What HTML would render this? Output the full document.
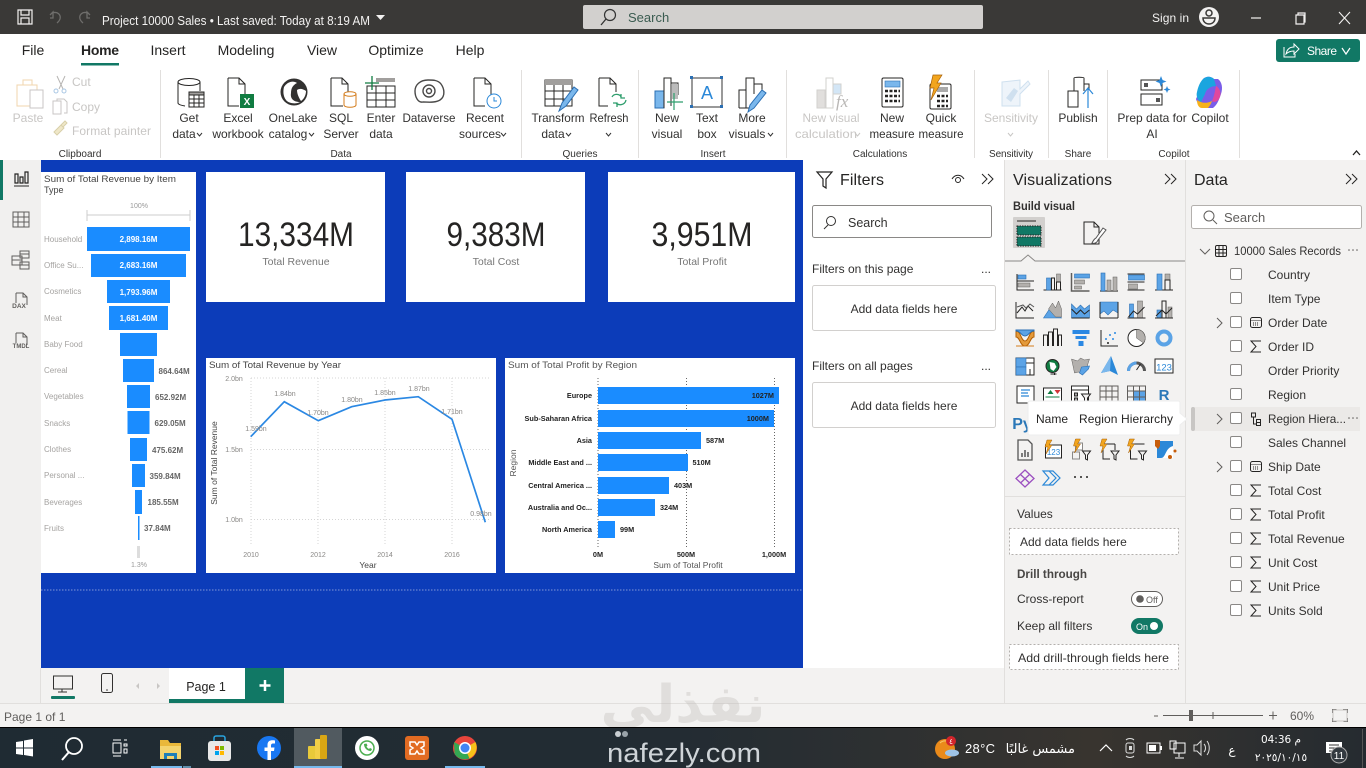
<!DOCTYPE html>
<html lang="en"><head><meta charset="utf-8"><title>Project 10000 Sales</title>
<style>
html,body{margin:0;padding:0;width:1366px;height:768px;overflow:hidden;background:#f3f2f1}
svg{display:block;position:absolute;left:0;top:0}
text{font-family:"Liberation Sans","DejaVu Sans",sans-serif;fill:#252423}
.r{font-size:12px;text-anchor:middle;fill:#323130}
.d{font-size:12px;text-anchor:middle;fill:#c8c6c4}
.g{font-size:10px;text-anchor:middle;fill:#323130}
.t{font-size:14px;text-anchor:middle;fill:#252423}
.p{font-size:12px;fill:#323130}
.h{font-size:16px;font-weight:bold;fill:#252423}
.c{font-size:7px;fill:#8a8886}
.n{font-size:7px;font-weight:bold;fill:#555}
.b{font-size:7.300px;font-weight:bold;fill:#222}
.i{fill:none;stroke:#252423;stroke-width:1}
.bl{fill:#5ba3e6;stroke:#2b6fb3;stroke-width:.6}
.gy{fill:#b3b0ad;stroke:#605e5c;stroke-width:.5}
</style></head><body>
<svg width="1366" height="768" viewBox="0 0 1366 768" xmlns="http://www.w3.org/2000/svg">
<defs><linearGradient id="tb" x1="0" x2="1" y1="0" y2="0"><stop offset="0" stop-color="#1f2b33"/><stop offset=".5" stop-color="#232c33"/><stop offset=".8" stop-color="#38342f"/><stop offset="1" stop-color="#252b30"/></linearGradient></defs>

<!-- backgrounds -->
<rect width="1366" height="768" fill="#f3f2f1"/>
<rect width="1366" height="34" fill="#3a3937"/>
<rect y="34" width="1366" height="126" fill="#fff"/>
<rect x="0" y="160" width="41" height="543" fill="#f1f0ef"/>
<rect x="41" y="160" width="762" height="508" fill="#0c3cb9"/>
<rect x="803" y="160" width="201" height="508" fill="#fff"/>
<path d="M1004.500 160V703M1185.500 160V703" stroke="#e1dfdd" fill="none"/>
<path d="M0 703.500H1366M40.500 668V703" stroke="#e1dfdd" fill="none"/>

<!-- watermark -->
<text x="683" y="722" style="font-family:'DejaVu Sans',sans-serif;font-size:52px;font-weight:bold;text-anchor:middle;fill:#bdbab6;opacity:.35" direction="rtl" textLength="165" lengthAdjust="spacingAndGlyphs">نفذلي</text>

<!-- title bar -->
<g fill="none" stroke="#f3f2f1" stroke-width="1.200">
<path d="M18 10h14v14H18zM21 10v5h8v-5M21 24v-6h8v6"/>
</g>
<g fill="none" stroke="#6f6e6c" stroke-width="1.300">
<path d="M50 15l3-3v6h-3M52 13c6-2 9 2 8 6-.6 2-2 3-3 4"/>
<path d="M90 15l-3-3v6h3M88 13c-6-2-9 2-8 6 .6 2 2 3 3 4"/>
</g>
<text x="102" y="25" style="font-size:12.500px;fill:#f3f2f1" textLength="268" lengthAdjust="spacingAndGlyphs">Project 10000 Sales  •  Last saved: Today at 8:19 AM</text>
<path d="M376 15h9l-4.500 5z" fill="#f3f2f1"/>
<rect x="583" y="5" width="400" height="24" rx="2" fill="#d2d0ce"/>
<circle cx="610" cy="15" r="5.500" fill="none" stroke="#333" stroke-width="1.200"/><path d="M606 19l-5 6" stroke="#333" stroke-width="1.300"/>
<text x="628" y="22" style="font-size:13px;fill:#3a5b50">Search</text>
<text x="1152" y="22" style="font-size:12px;fill:#f3f2f1" textLength="37">Sign in</text>
<circle cx="1209" cy="17" r="10" fill="#f3f2f1"/><circle cx="1209" cy="13" r="3" fill="none" stroke="#3a3937" stroke-width="1.500"/><path d="M1203 18h12c0 4-3 6-6 6s-6-2-6-6z" fill="none" stroke="#3a3937" stroke-width="1.500"/>
<path d="M1251 18h10" stroke="#f3f2f1" stroke-width="1.200"/>
<path d="M1296 15h8v9h-8zM1298 15v-2h7v9h-1" fill="none" stroke="#f3f2f1" stroke-width="1.200"/>
<path d="M1339 12l11 12M1350 12l-11 12" stroke="#f3f2f1" stroke-width="1.100"/>

<!-- tabs -->
<text class="t" x="33" y="55">File</text>
<text class="t" x="100" y="55" style="font-weight:bold" textLength="38">Home</text>
<rect x="81" y="63" width="38" height="2.500" fill="#117865"/>
<text class="t" x="168" y="55">Insert</text>
<text class="t" x="246" y="55">Modeling</text>
<text class="t" x="322" y="55">View</text>
<text class="t" x="396" y="55">Optimize</text>
<text class="t" x="470" y="55">Help</text>
<rect x="1276" y="39" width="84" height="23" rx="3" fill="#117865"/>
<path d="M1284 47v10h11v-3M1286 54c1-5 4-7 8-7v-3l5 5-5 5v-3c-3 0-6 1-8 3z" fill="none" stroke="#fff" stroke-width="1"/>
<text x="1307" y="55" style="font-size:12px;fill:#fff" textLength="30">Share</text>
<path d="M1342 48l4 6 4-6" fill="none" stroke="#fff" stroke-width="1.200"/>

<!-- ribbon separators -->
<path d="M160.500 70V158M521.500 70V158M638.500 70V158M786.500 70V158M974.500 70V158M1048.500 70V158M1107.500 70V158M1239.500 70V158" stroke="#e1dfdd" fill="none"/>

<!-- clipboard -->
<g fill="none" stroke-width="1">
<path d="M17 85h20v21H17z" stroke="#f0d5ad"/><rect x="23" y="80" width="9" height="5" stroke="#f0d5ad"/>
<rect x="30" y="90" width="13" height="18" fill="#fff" stroke="#c8c6c4"/>
<path d="M57 76l6 13M65 76l-6 13" stroke="#b7b5b3"/><circle cx="56" cy="91" r="2" stroke="#a9c7e4"/><circle cx="64" cy="91" r="2" stroke="#a9c7e4"/>
<path d="M53 101h8v13h-8zM57 101v-2h7l3 3v11h-3" stroke="#c8c6c4"/>
<path d="M54 132l7-7 3 3-7 7zM61 125l4-4 2 2-4 4" stroke="#d8cfa9" fill="#efe7c8"/>
</g>
<text class="d" x="28" y="122">Paste</text>
<text class="d" x="72" y="86" style="text-anchor:start">Cut</text>
<text class="d" x="72" y="111" style="text-anchor:start">Copy</text>
<text class="d" x="72" y="135" style="text-anchor:start" textLength="79">Format painter</text>
<text class="g" x="80" y="157">Clipboard</text>

<!-- data -->
<g fill="none" stroke="#252423">
<ellipse cx="189" cy="82" rx="11" ry="3.500"/><path d="M178 82v21c0 1 1 2 7 3M200 82v9"/>
<rect x="189" y="92" width="15" height="15" fill="#fff"/><rect x="189" y="92" width="15" height="3" fill="#a19f9d"/><path d="M194 95v12M199 95v12M189 99h15M189 103h15"/>
<path d="M228 78h11l6 6v10M228 78v28h11M239 78v6h6"/>
</g>
<rect x="240" y="94" width="14" height="14" fill="#107c41"/><text x="247" y="105" style="font-size:10px;font-weight:bold;fill:#fff;text-anchor:middle">X</text>
<circle cx="294" cy="92" r="13.500" fill="#323130"/><path d="M284 87c3-5 9-7 13-4-4 2-6 5-6 10-1 6 3 9 9 9-3 2-11 2-14-2-3-4-3-9-2-13z" fill="#fff"/><path d="M297 90c3-2 6-1 9 1 0 4-2 8-5 10-2-3-4-7-4-11z" fill="#fff"/>
<g fill="none" stroke="#252423">
<path d="M331 78h11l6 6v10M331 78v28h12M342 78v6h6"/>
<path d="M344 94c0-3 12-3 12 0v11c0 3-12 3-12 0zM344 94c0 3 12 3 12 0" stroke="#d47d1d" fill="#fff"/>
<path d="M367 86h28v21h-28zM367 93h28M367 100h28M376 86v21M386 86v21"/>
</g>
<rect x="376" y="78" width="19" height="4" fill="#a19f9d"/>
<path d="M372 76v14M365 83h14" stroke="#107c41" stroke-width="1.300"/>
<g fill="none" stroke="#4a4948" stroke-width="1.400"><path d="M428 80c-8 0-13 5-13 11 0 6 3 12 8 11 5 0 12 1 17-2 6-4 4-12 1-16-3-4-8-4-13-4z"/><circle cx="429" cy="91" r="6"/><circle cx="429" cy="91" r="2.500"/></g>
<g fill="none" stroke="#252423"><path d="M474 78h11l6 6v11M474 78v28h11M485 78v6h6"/></g>
<circle cx="494" cy="101" r="7" fill="#fff" stroke="#2b88d8"/><path d="M494 97v4h3" fill="none" stroke="#2b88d8"/>
<text class="r" x="189" y="122">Get</text><text class="r" x="184" y="138">data</text><path d="M197 133l2.500 3 2.500-3" fill="none" stroke="#333"/>
<text class="r" x="238" y="122">Excel</text><text class="r" x="238" y="138">workbook</text>
<text class="r" x="293" y="122">OneLake</text><text class="r" x="288" y="138">catalog</text><path d="M309 133l2.500 3 2.500-3" fill="none" stroke="#333"/>
<text class="r" x="341" y="122">SQL</text><text class="r" x="341" y="138">Server</text>
<text class="r" x="381" y="122">Enter</text><text class="r" x="381" y="138">data</text>
<text class="r" x="429" y="122" textLength="53" lengthAdjust="spacingAndGlyphs">Dataverse</text>
<text class="r" x="485" y="122">Recent</text><text class="r" x="480" y="138">sources</text><path d="M501 133l2.500 3 2.500-3" fill="none" stroke="#333"/>
<text class="g" x="341" y="157">Data</text>

<!-- queries -->
<g fill="none" stroke="#252423"><rect x="545" y="80" width="27" height="26"/><path d="M545 91h27M545 99h27M554 85v21M563 85v21"/></g>
<rect x="545" y="79" width="27" height="6" fill="#a19f9d"/>
<path d="M559 111l3-8 12-16 4 3-12 16z" fill="#7ab7ec" stroke="#2b6fb3"/>
<g fill="none"><path d="M599 78h11l6 6v8M599 78v28h9M610 78v6h6" stroke="#252423"/>
<path d="M612 97c2-4 8-3 9 0M626 100c-1 5-7 6-10 3M621 94v4h4M617 107v-4h-4" stroke="#2f9e6d" stroke-width="1.300"/></g>
<text class="r" x="558" y="122" textLength="53" lengthAdjust="spacingAndGlyphs">Transform</text><text class="r" x="553" y="138">data</text><path d="M566 133l2.500 3 2.500-3" fill="none" stroke="#333"/>
<text class="r" x="609" y="122" textLength="39" lengthAdjust="spacingAndGlyphs">Refresh</text><path d="M606 133l2.500 3 2.500-3" fill="none" stroke="#333"/>
<text class="g" x="580" y="157">Queries</text>

<!-- insert -->
<rect x="655" y="91" width="9" height="17" fill="#7ab7ec" stroke="#2b6fb3"/><g fill="none" stroke="#252423"><path d="M664 108V78h7v28M671 83h7v12"/></g><rect x="672" y="84" width="6" height="15" fill="#bbb"/><path d="M674 93v17M667 102h16" stroke="#2f9e6d" stroke-width="1.200"/>
<rect x="692" y="78" width="30" height="29" fill="#fff" stroke="#333"/><text x="707" y="99" style="font-size:18px;fill:#2b88d8;text-anchor:middle">A</text>
<g fill="#2b6fb3"><rect x="690" y="76" width="3" height="3"/><rect x="720" y="76" width="3" height="3"/><rect x="690" y="105" width="3" height="3"/><rect x="720" y="105" width="3" height="3"/></g>
<g fill="none" stroke="#252423"><path d="M739 108V90h7v18M746 90V78h8v16M754 84h8v6M739 108h12"/></g><path d="M748 112l2-7 12-15 4 3-12 15z" fill="#7ab7ec" stroke="#2b6fb3"/>
<text class="r" x="667" y="122">New</text><text class="r" x="667" y="138">visual</text>
<text class="r" x="707" y="122">Text</text><text class="r" x="707" y="138">box</text>
<text class="r" x="752" y="122">More</text><text class="r" x="747" y="138">visuals</text><path d="M768 133l2.500 3 2.500-3" fill="none" stroke="#333"/>
<text class="g" x="713" y="157">Insert</text>

<!-- calcs -->
<g fill="none" stroke="#d2d0ce"><rect x="817" y="90" width="8" height="18" fill="#e1dfdd"/><path d="M826 78h7v30h-7z"/><rect x="833" y="84" width="8" height="10" fill="#d3e6f6"/></g>
<text x="836" y="107" style="font-size:17px;font-style:italic;font-family:'Liberation Serif',serif;fill:#b8b6b4">fx</text>
<rect x="882" y="78" width="21" height="29" rx="1.500" fill="#fff" stroke="#252423"/><rect x="885" y="81" width="15" height="6" fill="#7ab7ec" stroke="#2b6fb3" stroke-width=".6"/>
<path d="M885 91h15M885 96h15M885 101h15" stroke="#252423" stroke-width="2.500" stroke-dasharray="3 1.500"/>
<rect x="930" y="84" width="21" height="25" rx="1.500" fill="#fff" stroke="#252423"/><rect x="937" y="87" width="11" height="5" fill="#aaa"/>
<path d="M937 96h11M937 101h11M937 106h11" stroke="#252423" stroke-width="2.500" stroke-dasharray="3 1.500"/>
<path d="M933 75h9l-5 8h4l-10 17 3-12h-4z" fill="#f2a51e" stroke="#a8610a" stroke-width=".7"/>
<text class="d" x="831" y="122" textLength="57" lengthAdjust="spacingAndGlyphs">New visual</text><text class="d" x="826" y="138" textLength="62" lengthAdjust="spacingAndGlyphs">calculation</text><path d="M855 133l2.500 3 2.500-3" fill="none" stroke="#c8c6c4"/>
<text class="r" x="892" y="122">New</text><text class="r" x="892" y="138" textLength="45" lengthAdjust="spacingAndGlyphs">measure</text>
<text class="r" x="941" y="122">Quick</text><text class="r" x="941" y="138" textLength="45" lengthAdjust="spacingAndGlyphs">measure</text>
<text class="g" x="880" y="157">Calculations</text>

<!-- sensitivity share copilot -->
<path d="M1002 82l18-2v9l8-8 2 3-10 10v12h-18z" fill="#eef4fa" stroke="#cfe0ef"/><path d="M1006 98l8-10 4 3-7 11z" fill="#cfe0ef"/>
<text class="d" x="1011" y="122" textLength="54" lengthAdjust="spacingAndGlyphs">Sensitivity</text><path d="M1008 133l2.500 3 2.500-3" fill="none" stroke="#c8c6c4"/>
<text class="g" x="1011" y="157" textLength="44">Sensitivity</text>
<g fill="none" stroke="#252423"><path d="M1068 107V91h10v16zM1074 91V78c0-1 10-1 10 0v13M1084 84h5v6"/></g>
<path d="M1088 108V88M1083 94l5-6 5 6" fill="none" stroke="#2b88d8" stroke-width="1.200"/>
<text class="r" x="1078" y="122">Publish</text><text class="g" x="1078" y="157">Share</text>
<g fill="none" stroke="#252423"><rect x="1141" y="80" width="21" height="10"/><rect x="1141" y="94" width="21" height="11"/></g><rect x="1144" y="83" width="4" height="4" fill="#555"/><rect x="1156" y="98" width="4" height="4" fill="#555"/>
<path d="M1161 76l1.500 4 4 1.500-4 1.500-1.500 4-1.500-4-4-1.500 4-1.500zM1167 86l1 2.500 2.500 1-2.500 1-1 2.500-1-2.500-2.500-1 2.500-1z" fill="#2b88d8"/>
<path d="M1203 79c3-3 8-3 11 0h4c4 3 5 9 3 15-2 6-4 11-8 14h-8c-5-1-8-5-9-9 3-6 4-14 7-20z" fill="#7a5de8"/>
<path d="M1203 79c3-3 8-3 11 0l2 7c-5 0-10 3-11 8l-4 8c-4-2-5-7-4-10 1-5 3-10 6-13z" fill="#1aa5df"/>
<path d="M1197 100c4 3 9 4 15 1-1 3-3 6-4 7h-6c-3 0-5-3-5-8z" fill="#f7b21b"/><path d="M1216 86c4 2 6 8 3 13-3 4-6 3-7 2 2-4 3-10 4-15z" fill="#e0479e"/>
<text class="r" x="1152" y="122">Prep data for</text><text class="r" x="1152" y="138">AI</text>
<text class="r" x="1210" y="122">Copilot</text><text class="g" x="1174" y="157">Copilot</text>
<path d="M1353 155l3.500-4 3.500 4" fill="none" stroke="#252423" stroke-width="1.300"/>

<!-- left rail -->
<rect x="0" y="160" width="3" height="40" fill="#117865"/>
<g fill="none" stroke="#252423" stroke-width="1"><path d="M14 186h15"/><path d="M15 174h3v9h-3zM20 177h3v6h-3zM25 172h3v11h-3z" stroke-width="1.200"/></g>
<g fill="none" stroke="#605e5c"><rect x="13" y="212" width="16" height="15"/><path d="M13 217h16M13 222h16M18 212v15M24 212v15"/></g>
<g fill="none" stroke="#605e5c"><rect x="12" y="256" width="10" height="9"/><rect x="20" y="251" width="9" height="7"/><rect x="20" y="262" width="9" height="7"/><path d="M12 260h10M20 254h9M20 265h9"/></g>
<path d="M16 293h7l4 4v8M16 293v10M23 293v4h4M16 355" fill="none" stroke="#605e5c"/><text x="19" y="308" style="font-size:6.500px;fill:#605e5c;text-anchor:middle;font-weight:bold">DAX</text>
<path d="M16 333h7l4 4v8M16 333v10M23 333v4h4" fill="none" stroke="#605e5c"/><text x="21" y="348" style="font-size:6px;fill:#605e5c;text-anchor:middle;font-weight:bold">TMDL</text>

<!-- cards -->
<rect x="41" y="172" width="155" height="401" fill="#fff"/>
<rect x="206" y="172" width="179" height="130" fill="#fff"/>
<rect x="406" y="172" width="179" height="130" fill="#fff"/>
<rect x="608" y="172" width="187" height="130" fill="#fff"/>
<rect x="206" y="358" width="290" height="215" fill="#fff"/>
<rect x="505" y="358" width="290" height="215" fill="#fff"/>
<path d="M41 590H803" stroke="#7f96d8" stroke-dasharray="1.500 1.500" fill="none"/>

<text x="296" y="246" style="font-size:34px;text-anchor:middle" textLength="116" lengthAdjust="spacingAndGlyphs">13,334M</text>
<text x="296" y="265" style="font-size:10.500px;fill:#777;text-anchor:middle">Total Revenue</text>
<text x="496" y="246" style="font-size:34px;text-anchor:middle" textLength="99" lengthAdjust="spacingAndGlyphs">9,383M</text>
<text x="496" y="265" style="font-size:10.500px;fill:#777;text-anchor:middle">Total Cost</text>
<text x="702" y="246" style="font-size:34px;text-anchor:middle" textLength="101" lengthAdjust="spacingAndGlyphs">3,951M</text>
<text x="702" y="265" style="font-size:10.500px;fill:#777;text-anchor:middle">Total Profit</text>

<!-- funnel -->
<text x="44" y="182" style="font-size:9px;fill:#444" textLength="132" lengthAdjust="spacingAndGlyphs">Sum of Total Revenue by Item</text>
<text x="44" y="193" style="font-size:9px;fill:#444">Type</text>
<text x="139" y="208" class="c" style="text-anchor:middle;fill:#999">100%</text>
<path d="M87 215H190M87 210V221M190 210V221" stroke="#ccc" fill="none"/>
<g fill="#1a8cff">
<rect x="87" y="227" width="103" height="24"/><rect x="91" y="254" width="95" height="23"/>
<rect x="107" y="280" width="63" height="23"/><rect x="109" y="306" width="59" height="24"/>
<rect x="120" y="333" width="37" height="23"/><rect x="123" y="359" width="31" height="23"/>
<rect x="127" y="385" width="23" height="23"/><rect x="127.500" y="411" width="22" height="23"/>
<rect x="130" y="438" width="17" height="23"/><rect x="132" y="464" width="13" height="23"/>
<rect x="135" y="490" width="7" height="24"/><rect x="138" y="516" width="1.500" height="24"/>
</g>
<rect x="137" y="546" width="3" height="12" fill="#ddd"/>
<text x="139" y="567" class="c" style="text-anchor:middle;fill:#999">1.3%</text>
<g style="font-size:8px">
<text x="44" y="242" style="fill:#a5a3a1">Household</text><text x="44" y="268" style="fill:#a5a3a1">Office Su...</text><text x="44" y="294" style="fill:#a5a3a1">Cosmetics</text><text x="44" y="321" style="fill:#a5a3a1">Meat</text><text x="44" y="347" style="fill:#a5a3a1">Baby Food</text><text x="44" y="373" style="fill:#a5a3a1">Cereal</text><text x="44" y="399" style="fill:#a5a3a1">Vegetables</text><text x="44" y="426" style="fill:#a5a3a1">Snacks</text><text x="44" y="452" style="fill:#a5a3a1">Clothes</text><text x="44" y="478" style="fill:#a5a3a1">Personal ...</text><text x="44" y="505" style="fill:#a5a3a1">Beverages</text><text x="44" y="531" style="fill:#a5a3a1">Fruits</text>
</g>
<g style="font-size:8px;font-weight:bold;text-anchor:middle">
<text x="138.500" y="242" style="fill:#fff">2,898.16M</text><text x="138.500" y="268" style="fill:#fff">2,683.16M</text><text x="138.500" y="295" style="fill:#fff">1,793.96M</text><text x="138.500" y="321" style="fill:#fff">1,681.40M</text>
</g>
<g style="font-size:8px;font-weight:bold">
<text x="158.500" y="374" style="fill:#666">864.64M</text><text x="155" y="400" style="fill:#666">652.92M</text><text x="154.500" y="426" style="fill:#666">629.05M</text><text x="152" y="453" style="fill:#666">475.62M</text><text x="149.500" y="479" style="fill:#666">359.84M</text><text x="147.500" y="505" style="fill:#666">185.55M</text><text x="144" y="531" style="fill:#666">37.84M</text>
</g>

<!-- line chart -->
<text x="209" y="368" style="font-size:9px;fill:#444" textLength="132" lengthAdjust="spacingAndGlyphs">Sum of Total Revenue by Year</text>
<path d="M251 378H490M251 449.500H490M251 519.500H490M251 378V545M318 378V545M385 378V545M452 378V545" stroke="#d5d5d5" stroke-dasharray="1 2" fill="none"/>
<polyline points="250.700,436.700 284.300,401.700 318.300,420.700 351.700,406.700 385,400 418.300,396.700 452,419.300 485.300,522.300" fill="none" stroke="#2b88e3" stroke-width="1.700"/>
<text x="256" y="431" class="c" style="text-anchor:middle">1.59bn</text><text x="285" y="396" class="c" style="text-anchor:middle">1.84bn</text><text x="318" y="415" class="c" style="text-anchor:middle">1.70bn</text><text x="352" y="402" class="c" style="text-anchor:middle">1.80bn</text><text x="385" y="395" class="c" style="text-anchor:middle">1.85bn</text><text x="419" y="391" class="c" style="text-anchor:middle">1.87bn</text><text x="452" y="414" class="c" style="text-anchor:middle">1.71bn</text><text x="481" y="516" class="c" style="text-anchor:middle">0.98bn</text>
<text x="234" y="381" class="c" style="text-anchor:middle">2.0bn</text><text x="234" y="452" class="c" style="text-anchor:middle">1.5bn</text><text x="234" y="522" class="c" style="text-anchor:middle">1.0bn</text>
<text x="251" y="557" class="c" style="text-anchor:middle">2010</text><text x="318" y="557" class="c" style="text-anchor:middle">2012</text><text x="385" y="557" class="c" style="text-anchor:middle">2014</text><text x="452" y="557" class="c" style="text-anchor:middle">2016</text>
<text x="368" y="568" style="font-size:8.500px;text-anchor:middle;fill:#444">Year</text>
<text transform="translate(217,463) rotate(-90)" style="font-size:8.500px;text-anchor:middle;fill:#444">Sum of Total Revenue</text>

<!-- bar chart -->
<text x="508" y="368" style="font-size:9px;fill:#555" textLength="129" lengthAdjust="spacingAndGlyphs">Sum of Total Profit by Region</text>
<path d="M598 378V548M686.500 378V548M774.500 378V548" stroke="#666" stroke-dasharray="1 2" fill="none"/>
<g fill="#1a8cff"><rect x="598" y="387" width="181" height="17"/><rect x="598" y="410" width="176" height="17"/><rect x="598" y="432" width="103" height="17"/><rect x="598" y="454" width="90" height="17"/><rect x="598" y="477" width="71" height="17"/><rect x="598" y="499" width="57" height="17"/><rect x="598" y="521" width="17" height="17"/></g>
<text class="b" x="592" y="398" style="text-anchor:end">Europe</text><text class="b" x="592" y="421" style="text-anchor:end">Sub-Saharan Africa</text><text class="b" x="592" y="443" style="text-anchor:end">Asia</text><text class="b" x="592" y="465" style="text-anchor:end">Middle East and ...</text><text class="b" x="592" y="488" style="text-anchor:end">Central America ...</text><text class="b" x="592" y="510" style="text-anchor:end">Australia and Oc...</text><text class="b" x="592" y="532" style="text-anchor:end">North America</text>
<text class="b" x="774" y="398" style="text-anchor:end">1027M</text><text class="b" x="769" y="421" style="text-anchor:end">1000M</text>
<text class="b" x="706" y="443">587M</text><text class="b" x="692.500" y="465">510M</text><text class="b" x="674" y="488">403M</text><text class="b" x="660" y="510">324M</text><text class="b" x="620" y="532">99M</text>
<text class="b" x="598" y="557" style="text-anchor:middle">0M</text><text class="b" x="686" y="557" style="text-anchor:middle">500M</text><text class="b" x="774" y="557" style="text-anchor:middle">1,000M</text>
<text x="688" y="568" style="font-size:8.500px;text-anchor:middle;fill:#555">Sum of Total Profit</text>
<text transform="translate(516,463) rotate(-90)" style="font-size:8.500px;text-anchor:middle;fill:#555">Region</text>

<!-- filters pane -->
<path d="M817 172h15l-6 7v9l-3-2v-7z" fill="none" stroke="#252423" stroke-width="1.200"/>
<text x="840" y="185" class="h" style="font-weight:normal;-webkit-text-stroke:.3px #252423" textLength="44">Filters</text>
<path d="M952 179c3-5 9-5 12 0" fill="none" stroke="#252423"/><circle cx="958" cy="180" r="2.500" fill="none" stroke="#252423"/>
<path d="M982 174l5 5-5 5M988 174l5 5-5 5" fill="none" stroke="#252423"/>
<rect x="812.500" y="205.500" width="179" height="32" rx="2" fill="#fff" stroke="#8a8886"/>
<circle cx="831" cy="221" r="4.500" fill="none" stroke="#323130"/><path d="M828 225l-4 4" stroke="#323130"/>
<text x="848" y="227" class="p" style="font-size:12.500px">Search</text>
<text x="812" y="273" class="p">Filters on this page</text><text x="986" y="273" class="p" style="text-anchor:middle">...</text>
<rect x="812.500" y="285.500" width="183" height="45" rx="2" fill="#fff" stroke="#d2d0ce"/>
<text x="904" y="313" class="p" style="text-anchor:middle">Add data fields here</text>
<text x="812" y="370" class="p">Filters on all pages</text><text x="986" y="370" class="p" style="text-anchor:middle">...</text>
<rect x="812.500" y="382.500" width="183" height="45" rx="2" fill="#fff" stroke="#d2d0ce"/>
<text x="904" y="410" class="p" style="text-anchor:middle">Add data fields here</text>

<!-- viz pane -->
<text x="1013" y="185" class="h" style="font-weight:normal;-webkit-text-stroke:.3px #252423" textLength="99">Visualizations</text>
<path d="M1165 174l5 5-5 5M1171 174l5 5-5 5" fill="none" stroke="#252423"/>
<text x="1013" y="210" style="font-size:11.500px;font-weight:bold;fill:#323130" textLength="62" lengthAdjust="spacingAndGlyphs">Build visual</text>
<rect x="1013" y="217" width="32" height="31" fill="#d2d0ce" rx="1"/>
<path d="M1017 221h19" stroke="#252423"/>
<rect x="1017" y="226" width="24" height="9" fill="#117865" stroke="#252423" stroke-dasharray="1.500 1"/>
<rect x="1017" y="237" width="24" height="9" fill="#117865" stroke="#252423" stroke-dasharray="1.500 1"/>
<path d="M1084 222h10l5 5v17h-15z" fill="none" stroke="#252423"/><path d="M1094 222v5h5" fill="none" stroke="#252423"/>
<path d="M1092 243c2 1 5 0 6-3l8-10-3-2-7 10c-2 1-3 3-4 5z" fill="#fff" stroke="#555"/>
<path d="M1005 261h16l7-6 7 6h150" fill="none" stroke="#8a8886"/>

<!-- viz icons row1 y 282 -->
<g fill="none" stroke="#252423" stroke-width="1">
<g transform="translate(1025,282)"><path d="M-8-8V8H9"/><rect x="-7" y="-7" width="8" height="4" class="bl"/><rect x="-7" y="1" width="12" height="4" class="gy"/><path d="M-8-1H9"/></g>
<g transform="translate(1052.500,282)"><path d="M-9 8H9"/><rect x="-6" y="-4" width="4" height="12" class="bl"/><path d="M-1 8V-4h3V8"/><rect x="4" y="-8" width="4" height="8" class="gy"/><path d="M4 0h4V8H4z"/></g>
<g transform="translate(1080.500,282)" stroke="#605e5c"><path d="M-9-9V9H9" stroke-width="1.500"/><rect x="-6" y="-8" width="15" height="4" class="bl"/><rect x="-6" y="-2" width="10" height="4" class="gy"/><rect x="-6" y="4" width="7" height="3" class="gy"/></g>
<g transform="translate(1109,282)" stroke="#605e5c"><path d="M-9 9H9" stroke-width="1.500"/><rect x="-8" y="-9" width="4" height="18" class="bl"/><rect x="-2" y="-2" width="4" height="11" class="gy"/><rect x="4" y="-5" width="4" height="14" class="gy"/></g>
<g transform="translate(1136.500,282)"><path d="M-9-8H8M-9 0H8M-9 8H8"/><rect x="-8" y="-7" width="16" height="5" class="bl"/><rect x="-8" y="2" width="9" height="5" class="gy"/></g>
<g transform="translate(1164,282)"><path d="M-9 8H9"/><rect x="-7" y="-8" width="5" height="16" class="bl"/><rect x="1" y="-8" width="5" height="6" class="gy"/><path d="M1-2H6V8H1z"/></g>
</g>
<!-- row 2 -->
<g fill="none" stroke="#252423" stroke-width="1">
<g transform="translate(1025,310)"><path d="M-9-8V8H9M-8 3l5-6 3 4 3-5 5 5" /><path d="M-8-3l6-2 3 3 4-4 4 3" stroke="#555"/></g>
<g transform="translate(1052.500,310)"><path d="M-9 8l6-9 5 4 2-2 5 7z" class="bl"/><path d="M-4-1l4-6 3 5 3-7 3 8v8H3z" class="gy"/></g>
<g transform="translate(1080.500,310)"><path d="M-9-6l5 5 4-4 4 4 5-4V8H-9z" class="bl"/><path d="M-9-1l5 5 4-4 4 4 5-4" stroke="#252423"/><path d="M-9 8H9"/></g>
<g transform="translate(1109,310)"><path d="M-9-8H9V3l-5-3-5 5-4-4-4 3z" class="bl"/><path d="M-9 8H9M-9-8V8M9-8V8"/></g>
<g transform="translate(1136.500,310)"><rect x="-7" y="-6" width="4" height="14" class="bl"/><rect x="1" y="-9" width="5" height="17" class="gy"/><path d="M-9 8H9M-8 7l5-6 4 3 7-7"/></g>
<g transform="translate(1164,310)"><rect x="-7" y="0" width="4" height="8" class="bl"/><path d="M-2 8V-9h4V8"/><rect x="4" y="-3" width="4" height="11" class="gy"/><path d="M-9 8H9M-8 6l6-6 4 4 6-6"/></g>
</g>
<!-- row 3 -->
<g fill="none" stroke="#252423" stroke-width="1">
<g transform="translate(1025,338)"><path d="M-9-7c5 0 5 10 9 10s4-10 9-10V-1c-4 0-4 9-9 9s-5-9-9-9z" fill="#e39a3b" stroke="#b35d00"/><path d="M-9-7c5 0 5 5 9 5s4-5 9-5v-1H-9z" fill="#5ba3e6" stroke="#2b6fb3"/><path d="M-9 8H9" stroke="#d47d1d"/></g>
<g transform="translate(1052.500,338)"><path d="M-9 8V-3h4v11M-4 8V-6h4V8M1 8V-9h4V8M6 8V-3h3V8" /></g>
<g transform="translate(1080.500,338)"><path d="M-8-8H9v4H-8z" fill="#2b88e3" stroke="none"/><path d="M-5-2H6V1H-5z" fill="#2b88e3" stroke="none"/><path d="M-2 3H3V8H-2z" fill="#2b88e3" stroke="none"/></g>
<g transform="translate(1109,338)"><path d="M-8-8V8H9"/><g fill="#5ba3e6" stroke="none"><rect x="-4" y="0" width="2" height="2"/><rect x="0" y="-4" width="2" height="2"/><rect x="3" y="0" width="2" height="2"/><rect x="-2" y="4" width="2" height="2" fill="#555"/><rect x="5" y="-6" width="2" height="2"/></g></g>
<g transform="translate(1136.500,338)"><circle r="8.500" fill="#fff"/><path d="M0 0V-8.500A8.500 8.500 0 0 1 7 5z" class="gy"/></g>
<g transform="translate(1164,338)"><circle r="6.500" fill="none" stroke="#5ba3e6" stroke-width="4"/></g>
</g>
<!-- row 4 -->
<g fill="none" stroke="#252423" stroke-width="1">
<g transform="translate(1025,366)"><rect x="-9" y="-8" width="18" height="17" fill="#fff"/><rect x="-9" y="-8" width="10" height="9" class="bl"/><rect x="-9" y="1" width="10" height="8" class="bl"/><path d="M1-3H9M5 3v6"/></g>
<g transform="translate(1052.500,366)"><circle r="6.500" fill="#107c41"/><path d="M-3-4l5 1 2 4-3 4-3-2z" fill="#fff" stroke="none"/><path d="M-2 8h6M2 7v2"/></g>
<g transform="translate(1080.500,366)"><path d="M-9-7l6 2 3-3 4 2 5-1-2 6 1 4-6 6-4-3-4 1-1-5z" class="gy"/><path d="M1 1l8-1-1 3-6 6-3-2z" class="bl"/></g>
<g transform="translate(1109,366)"><path d="M2-10L9 9 1 5-8 7z" fill="#2b88d8" stroke="none"/><path d="M2-10L1 5-8 7z" fill="#7ab7ec" stroke="none"/></g>
<g transform="translate(1136.500,366)"><path d="M-8 5a8 8 0 0 1 16 0" stroke-width="3" stroke="#555"/><path d="M-8 5a8 8 0 0 1 8-8" stroke-width="3" stroke="#5ba3e6"/><path d="M0 4l4-6" stroke="#252423"/></g>
<g transform="translate(1164,366)"><rect x="-9" y="-7" width="18" height="14" fill="#fff"/></g>
</g>
<text x="1164" y="370.500" style="font-size:9.500px;text-anchor:middle;fill:#2b88d8">123</text>
<!-- row 5 -->
<g fill="none" stroke="#252423" stroke-width="1">
<g transform="translate(1025,394)"><rect x="-8" y="-8" width="17" height="17" fill="#fff"/><path d="M-4-4H5M-4-1H3M-4 2H4" stroke="#2b88d8" stroke-width="1.300"/></g>
<g transform="translate(1052.500,394)"><rect x="-9" y="-6" width="18" height="14" fill="#fff"/><path d="M-5 0l3-4 3 4z" fill="#107c41" stroke="none"/><path d="M2-4h6l-3 4z" fill="#d13438" stroke="none"/><path d="M-7 3h14" stroke="#107c41"/></g>
<g transform="translate(1080.500,394)"><rect x="-9" y="-8" width="17" height="16" fill="#fff"/><path d="M-9-4H8"/><rect x="-6" y="-1" width="3" height="3" fill="#aaa"/><rect x="-6" y="4" width="3" height="3" fill="#aaa"/><path d="M1 0h9l-3 4v5l-3-2V4z" fill="#f3f2f1"/></g>
<g transform="translate(1109,394)" stroke="#605e5c"><rect x="-9" y="-8" width="18" height="16"/><path d="M-9-3H9M-9 3H9M-3-8V8M3-8V8"/></g>
<g transform="translate(1136.500,394)" stroke="#605e5c"><rect x="-9" y="-8" width="18" height="16"/><rect x="-3" y="-3" width="12" height="11" fill="#5ba3e6"/><path d="M-9-3H9M-9 3H9M-3-8V8M3-8V8"/></g>
</g>
<text x="1164" y="400" style="font-size:15px;font-weight:bold;text-anchor:middle;fill:#2b78b8">R</text>
<text x="1022" y="429" style="font-size:16px;font-weight:bold;text-anchor:middle;fill:#2b78b8">Py</text>
<!-- row 7 -->
<g fill="none" stroke="#252423" stroke-width="1">
<g transform="translate(1025,450)" stroke="#555"><path d="M-7-10H3l4 4V10H-7z" stroke-width="1.300"/><path d="M-3 7V3M0 7V0M3 7V2" stroke-width="1.500"/></g>
<g transform="translate(1052.500,450)"><rect x="-7" y="-5" width="16" height="13" fill="#fff"/></g>
<g transform="translate(1080.500,450)"><rect x="-5" y="-7" width="7" height="7" fill="#fff" stroke="#8a8886"/><rect x="-8" y="2" width="7" height="7" stroke="#8a8886"/><path d="M2 1h8l-3 4v5l-2-1V5z" fill="#f3f2f1"/><path d="M-5-11h5l-3 5h3l-6 9 2-7h-3z" fill="#f2a51e" stroke="#a8610a" stroke-width=".5"/></g>
<g transform="translate(1109,450)"><path d="M-6-6H6M-6-6V9H1M6-6V0" /><path d="M2 1h8l-3 4v5l-2-1V5z" fill="#f3f2f1"/><path d="M-7-11h5l-3 5h3l-6 9 2-7h-3z" fill="#f2a51e" stroke="#a8610a" stroke-width=".5"/></g>
<g transform="translate(1136.500,450)"><path d="M-6-6H8M-6-6V9H1"/><path d="M2 1h8l-3 4v5l-2-1V5z" fill="#f3f2f1"/><path d="M-7-11h5l-3 5h3l-6 9 2-7h-3z" fill="#f2a51e" stroke="#a8610a" stroke-width=".5"/></g>
<g transform="translate(1164,450)"><rect x="-7" y="-9" width="16" height="17" fill="#2b88d8" stroke="none"/><path d="M-3 8c5 0 4-10 12-12V8z" fill="#fff" stroke="none"/><path d="M-9-10h5V-4L-6-1-9-4z" fill="#c75d0a" stroke="none"/><circle cx="6" cy="7" r="2" fill="#c75d0a" stroke="none"/><circle cx="11" cy="1" r="1.500" fill="#c75d0a" stroke="none"/></g>
</g>
<text x="1053.500" y="455" style="font-size:8px;text-anchor:middle;fill:#2b88d8">123</text>
<path d="M1047 440h5l-3 5h3l-6 9 2-7h-3z" fill="#f2a51e" stroke="#a8610a" stroke-width=".5"/>
<!-- row 8 -->
<path d="M1025 470l9 8.500-9 8.500-9-8.500zM1025 470v0M1020.500 474.500l9 8.500M1029.500 474.500l-9 8.500" fill="none" stroke="#9b4fc0" stroke-width="1.300"/>
<path d="M1043 471h10l7 7-7 7h-10l6-7zM1049 471l7 7-7 7" fill="none" stroke="#2b88d8" stroke-width="1.200"/>
<g fill="#252423"><circle cx="1075" cy="477" r="1"/><circle cx="1081" cy="477" r="1"/><circle cx="1087" cy="477" r="1"/></g>

<!-- tooltip -->
<path d="M1030 401H1178a2 2 0 0 1 2 2v10l7 6-7 6v8a2 2 0 0 1-2 2H1030a2 2 0 0 1-2-2V403a2 2 0 0 1 2-2z" fill="#fff" stroke="#eee"/>
<text x="1036" y="423" style="font-size:12px">Name</text>
<text x="1079" y="423" style="font-size:12px" textLength="94">Region Hierarchy</text>

<!-- viz lower -->
<path d="M1005 496.500H1185" stroke="#e1dfdd" fill="none"/>
<text x="1017" y="518" class="p">Values</text>
<rect x="1009.500" y="528.500" width="169" height="26" fill="#fff" stroke="#b3b0ad" stroke-dasharray="2 2"/>
<text x="1020" y="546" class="p">Add data fields here</text>
<text x="1017" y="578" class="p" style="font-weight:bold;fill:#484644" textLength="70" lengthAdjust="spacingAndGlyphs">Drill through</text>
<text x="1017" y="603" class="p">Cross-report</text>
<rect x="1131.500" y="591.500" width="31" height="15" rx="7.500" fill="#fff" stroke="#605e5c"/><circle cx="1140" cy="599" r="3.800" fill="#605e5c"/><text x="1146" y="603" style="font-size:9px;fill:#605e5c">Off</text>
<text x="1017" y="630" class="p">Keep all filters</text>
<rect x="1131" y="618" width="32" height="16" rx="8" fill="#117865"/><circle cx="1154" cy="626" r="4" fill="#fff"/><text x="1136" y="630" style="font-size:9px;fill:#fff">On</text>
<rect x="1009.500" y="644.500" width="169" height="25" fill="#fff" stroke="#b3b0ad" stroke-dasharray="2 2"/>
<text x="1018" y="662" class="p" textLength="151" lengthAdjust="spacingAndGlyphs">Add drill-through fields here</text>

<!-- data pane -->
<text x="1194" y="185" class="h" style="font-weight:normal;-webkit-text-stroke:.3px #252423">Data</text>
<path d="M1346 174l5 5-5 5M1352 174l5 5-5 5" fill="none" stroke="#252423"/>
<rect x="1191.500" y="205.500" width="170" height="23" rx="2" fill="#fff" stroke="#b3b0ad"/>
<circle cx="1209" cy="216" r="5" fill="none" stroke="#605e5c"/><path d="M1213 220l4 4" stroke="#605e5c"/>
<text x="1224" y="222" style="font-size:13px;fill:#605e5c">Search</text>
<path d="M1200 249l5 5 5-5" fill="none" stroke="#605e5c"/>
<g fill="none" stroke="#252423"><rect x="1215.500" y="245.500" width="11" height="11" rx="1.500"/><path d="M1215.500 249.500h11M1215.500 253h11M1219 245.500v11M1223 245.500v11"/></g>
<text x="1234" y="255" style="font-size:12px;fill:#323130" textLength="107" lengthAdjust="spacingAndGlyphs">10000 Sales Records</text>
<g fill="#605e5c"><circle cx="1349" cy="250" r=".8"/><circle cx="1353" cy="250" r=".8"/><circle cx="1357" cy="250" r=".8"/></g>
<rect x="1192" y="407" width="168" height="24" fill="#ebe9e7"/><rect x="1191" y="407" width="4" height="24" rx="2" fill="#c8c6c4"/>
<g fill="#fff" stroke="#8a8886">
<rect x="1230.500" y="268.500" width="11" height="11" rx="1.500"/><rect x="1230.500" y="292.500" width="11" height="11" rx="1.500"/><rect x="1230.500" y="316.500" width="11" height="11" rx="1.500"/><rect x="1230.500" y="340.500" width="11" height="11" rx="1.500"/><rect x="1230.500" y="364.500" width="11" height="11" rx="1.500"/><rect x="1230.500" y="388.500" width="11" height="11" rx="1.500"/><rect x="1230.500" y="412.500" width="11" height="11" rx="1.500"/><rect x="1230.500" y="436.500" width="11" height="11" rx="1.500"/><rect x="1230.500" y="460.500" width="11" height="11" rx="1.500"/><rect x="1230.500" y="484.500" width="11" height="11" rx="1.500"/><rect x="1230.500" y="508.500" width="11" height="11" rx="1.500"/><rect x="1230.500" y="532.500" width="11" height="11" rx="1.500"/><rect x="1230.500" y="556.500" width="11" height="11" rx="1.500"/><rect x="1230.500" y="580.500" width="11" height="11" rx="1.500"/><rect x="1230.500" y="604.500" width="11" height="11" rx="1.500"/>
</g>
<path d="M1217 318l5 5-5 5M1217 414l5 5-5 5M1217 462l5 5-5 5" fill="none" stroke="#605e5c"/>
<text x="1268" y="279" class="p">Country</text><text x="1268" y="303" class="p">Item Type</text><text x="1268" y="327" class="p">Order Date</text><text x="1268" y="351" class="p">Order ID</text><text x="1268" y="375" class="p">Order Priority</text><text x="1268" y="399" class="p">Region</text><text x="1268" y="423" class="p" textLength="78" lengthAdjust="spacingAndGlyphs">Region Hiera...</text><text x="1268" y="447" class="p">Sales Channel</text><text x="1268" y="471" class="p">Ship Date</text><text x="1268" y="495" class="p">Total Cost</text><text x="1268" y="519" class="p">Total Profit</text><text x="1268" y="543" class="p">Total Revenue</text><text x="1268" y="567" class="p">Unit Cost</text><text x="1268" y="591" class="p">Unit Price</text><text x="1268" y="615" class="p">Units Sold</text>
<g fill="#605e5c"><circle cx="1349" cy="418" r=".8"/><circle cx="1353" cy="418" r=".8"/><circle cx="1357" cy="418" r=".8"/></g>
<g fill="none" stroke="#252423">
<rect x="1250.500" y="317.500" width="11" height="10" rx="2"/><path d="M1250.500 320.500h11M1253 323h6M1253 325h6" stroke-dasharray="1 1"/>
<rect x="1250.500" y="461.500" width="11" height="10" rx="2"/><path d="M1250.500 464.500h11M1253 467h6M1253 469h6" stroke-dasharray="1 1"/>
<path d="M1251.500 413h4v4h-4zM1253.500 417v7h3M1256.500 419.500h4v3h-4zM1256.500 422.500h4v3h-4z"/>
<path d="M1261 341h-10l5 5.500-5 5.500h10M1261 485h-10l5 5.500-5 5.500h10M1261 509h-10l5 5.500-5 5.500h10M1261 533h-10l5 5.500-5 5.500h10M1261 557h-10l5 5.500-5 5.500h10M1261 581h-10l5 5.500-5 5.500h10M1261 605h-10l5 5.500-5 5.500h10"/>
</g>

<!-- page tabs -->
<rect x="53.500" y="676" width="19" height="13" fill="none" stroke="#323130"/><path d="M62 689v3M58 692h9" stroke="#323130"/>
<rect x="51" y="696" width="24" height="3" rx="1" fill="#117865"/>
<rect x="101.500" y="673.500" width="11" height="19" rx="2" fill="none" stroke="#323130"/><circle cx="107" cy="690" r=".8" fill="#323130"/>
<path d="M139 683l-3 3 3 3zM157 683l3 3-3 3z" fill="#c8c6c4"/>
<rect x="169" y="668" width="76" height="35" fill="#fff"/><rect x="169" y="699" width="76" height="4" fill="#117865"/>
<text x="206" y="691" style="font-size:12.500px;text-anchor:middle">Page 1</text>
<rect x="245" y="668" width="39" height="35" fill="#117865"/>
<path d="M265 680v11M259.500 685.500h11" stroke="#fff" stroke-width="2.500"/>

<!-- status -->
<text x="4" y="721" style="font-size:12px;fill:#605e5c">Page 1 of 1</text>
<path d="M1154 716h4M1163 715.500h100M1213 712v7M1269 715.500h8M1273 711.500v8" stroke="#605e5c" fill="none"/>
<rect x="1189" y="710" width="4" height="11" fill="#605e5c"/>
<text x="1290" y="720" style="font-size:12px;fill:#605e5c">60%</text>
<path d="M1332.500 713v-3.500h4M1343 709.500h4.500v3.500M1347.500 718v3.500h-4M1336.500 721.500h-4V718" fill="none" stroke="#605e5c"/>
<path d="M1333 710h14v11h-14z" fill="none" stroke="#c8c6c4"/>

<!-- taskbar -->
<rect y="727" width="1366" height="41" fill="url(#tb)"/>
<path d="M0 727.500H1366" stroke="#000"/>
<path d="M16 742l7-1v6.500h-7zM24 740.500l9-1.500v8.500h-9zM16 748.500h7v6.500l-7-1zM24 748.500h9v8l-9-1.500z" fill="#fff"/>
<circle cx="74" cy="746" r="8" fill="none" stroke="#fff" stroke-width="1.800"/><path d="M69 752l-7 8" stroke="#fff" stroke-width="2"/>
<path d="M113 740h8M124 740h3M113 743h8v10h-8zM124 744h3v2h-3zM124 749h3v4h-3zM113 756h8" fill="none" stroke="#fff"/>
<path d="M160 740h8l2 3h11v16h-21z" fill="#e9b83b"/><path d="M160 746h21v13h-21z" fill="#f4d46f"/><path d="M164 759v-6h13v6h-3v-3h-7v3z" fill="#1f7fb8"/>
<rect x="151" y="766" width="31" height="2" fill="#76b9ed"/><rect x="183" y="766" width="8" height="2" fill="#5f8eab"/>
<rect x="208" y="741" width="23" height="20" rx="3" fill="#e9e9e9"/><path d="M214 741v-3a2 2 0 0 1 2-2h7a2 2 0 0 1 2 2v3" fill="none" stroke="#29a4e0" stroke-width="1.500"/>
<rect x="215" y="746" width="4" height="4" fill="#f25022"/><rect x="220" y="746" width="4" height="4" fill="#7fba00"/><rect x="215" y="751" width="4" height="4" fill="#00a4ef"/><rect x="220" y="751" width="4" height="4" fill="#ffb900"/>
<circle cx="269" cy="748" r="12" fill="#1877f2"/><path d="M271 760v-9h3l.5-3.500H271v-2c0-1 .5-2 2-2h2v-3c-4-.6-7.500 0-7.500 4.500v2.500h-3v3.500h3v9z" fill="#fff"/>
<rect x="294" y="728" width="48" height="40" fill="#515a60"/><rect x="294" y="766" width="48" height="2" fill="#76b9ed"/>
<rect x="308" y="746" width="8" height="13" rx="1" fill="#e8c93a"/><rect x="315" y="739" width="7" height="20" rx="1" fill="#f2cf47"/><rect x="320" y="735" width="7" height="24" rx="1" fill="#d9a614"/>
<circle cx="367" cy="748" r="12" fill="#fff"/><circle cx="367" cy="748" r="7" fill="none" stroke="#4cae50" stroke-width="1.500"/><path d="M364 744c0 4 3 7 7 7l1-2-2-1-1 1c-1-.5-2-1.500-2.500-2.500l1-1-1-2z" fill="#4cae50"/>
<rect x="405" y="736" width="24" height="24" rx="3" fill="#e26b22"/><path d="M410 742h5l2 3 2-3h5v4l-3 2 3 2v4h-5l-2-3-2 3h-5v-4l3-2-3-2z" fill="none" stroke="#fff" stroke-width="1.500"/>
<circle cx="465" cy="748" r="12" fill="#e8453c"/><path d="M465 748l10.400-6a12 12 0 0 1-6 16.400z" fill="#f8c119"/><path d="M465 748l4.400 10.400a12 12 0 0 1-14.800-4.400l-0.600-12z" fill="#34a853"/><circle cx="465" cy="748" r="6" fill="#fff"/><circle cx="465" cy="748" r="4.500" fill="#4285f4"/>
<rect x="445" y="766" width="40" height="2" fill="#76b9ed"/>
<circle cx="618" cy="734" r="3" fill="#c9ced2"/><circle cx="625" cy="734" r="3" fill="#9aa3a9"/>
<text x="684" y="762" style="font-size:27px;text-anchor:middle;fill:#cfd4d8" textLength="154" lengthAdjust="spacingAndGlyphs">nafezly.com</text>
<circle cx="945" cy="749" r="10" fill="#ea8a1a"/><path d="M940 743a7 7 0 0 1 10 0" fill="none" stroke="#f6c76a"/><ellipse cx="952" cy="753" rx="7" ry="3.500" fill="#9ec3e6"/><circle cx="951" cy="741" r="5" fill="#d3252b"/><text x="951" y="744" style="font-size:7px;fill:#fff;text-anchor:middle">٤</text>
<text x="965" y="753" style="font-size:13px;fill:#fff" textLength="30">28°C</text>
<text x="1075" y="753" style="font-family:'DejaVu Sans',sans-serif;font-size:13px;fill:#fff;text-anchor:start" direction="rtl">مشمس غالبًا</text>
<path d="M1100 751l6-6 6 6" fill="none" stroke="#fff" stroke-width="1.200"/>
<rect x="1126" y="743" width="8" height="10" rx="2" fill="none" stroke="#ddd"/><path d="M1126 756c2 2 6 2 8 0M1126 740c2-2 6-2 8 0" fill="none" stroke="#ddd"/><rect x="1129" y="746" width="3" height="4" fill="#ddd"/>
<rect x="1147" y="743" width="13" height="10" fill="none" stroke="#fff"/><rect x="1149" y="745" width="7" height="6" fill="#fff"/><rect x="1160" y="746" width="2" height="4" fill="#fff"/>
<path d="M1170 741h6v8h-6zM1174 743h11v10h-11zM1179 753v4M1175 758h9" fill="none" stroke="#fff"/>
<path d="M1194 745h3l4-4v14l-4-4h-3zM1204 744c2 2 2 6 0 8M1207 741c3 4 3 10 0 14" fill="none" stroke="#ddd"/>
<text x="1232" y="754" style="font-family:'DejaVu Sans',sans-serif;font-size:12px;fill:#fff;text-anchor:middle">ع</text>
<text x="1281" y="743" style="font-family:'DejaVu Sans',sans-serif;font-size:10.500px;fill:#fff;text-anchor:middle">04:36 م</text>
<text x="1281" y="761" style="font-family:'DejaVu Sans',sans-serif;font-size:10.500px;fill:#fff;text-anchor:middle" direction="ltr">٢٠٢٥/١٠/١٥</text>
<path d="M1326 742h16v11h-5l-3 4v-4h-8z" fill="#fff"/><path d="M1329 745h10M1329 748h10M1329 751h6" stroke="#333"/>
<circle cx="1339" cy="755" r="8" fill="#333a40" stroke="#aaa"/><text x="1339" y="759" style="font-size:10px;fill:#fff;text-anchor:middle">11</text>
<path d="M1362.500 729V768" stroke="#555"/>
</svg>
</body></html>
